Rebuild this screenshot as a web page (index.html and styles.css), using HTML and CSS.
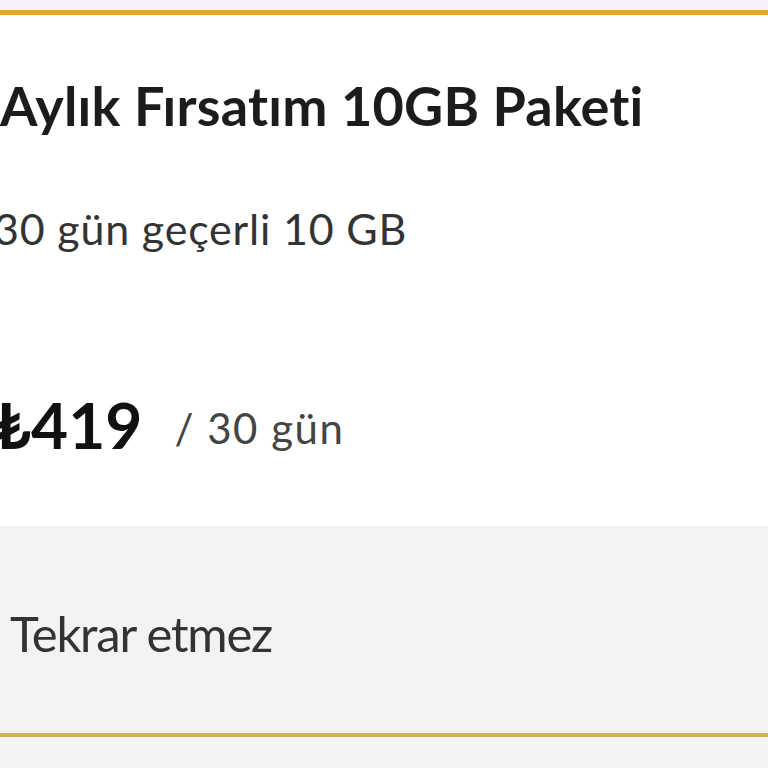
FILE: index.html
```html
<!DOCTYPE html>
<html lang="tr">
<head>
<meta charset="utf-8">
<link rel="stylesheet" href="styles.css">
</head>
<body>
<div class="top-strip"></div>
<section class="card">
  <div class="card-body">
    <h1 class="title">Aylık Fırsatım 10GB Paketi</h1>
    <p class="desc">30 gün geçerli 10 GB</p>
    <p class="price"><span class="amount">₺419</span><span class="per">/ 30 gün</span></p>
  </div>
  <div class="card-foot">
    <p class="renew">Tekrar etmez</p>
  </div>
</section>
<div class="bottom-strip"></div>
</body>
</html>
```
FILE: styles.css
```css
html, body {
  margin: 0;
  padding: 0;
}
body {
  width: 768px;
  height: 768px;
  overflow: hidden;
  background: #f4f4f2;
  font-family: "Lato", "Noto Sans", sans-serif;
}
.top-strip {
  height: 10px;
  background: #f6f1fb;
  border-bottom: 5px solid #e7a13b;
}
.card {
  background: #ffffff;
  border-bottom: 4px solid #cfb45a;
}
.card-body {
  padding: 61px 0 66px 0;
  margin-left: -6px;
}
.title {
  margin: 0 0 0 6px;
  font-size: 54px;
  line-height: 60px;
  font-weight: 700;
  color: #1c1c1c;
  letter-spacing: 0.2px;
}
.desc {
  margin: 68px 0 0 0;
  font-size: 43px;
  line-height: 50px;
  font-weight: 400;
  color: #333333;
  letter-spacing: 0.8px;
}
.price {
  margin: 136px 0 0 0;
  height: 70px;
  font-size: 64px;
  line-height: 70px;
  white-space: nowrap;
}
.amount {
  font-size: 64px;
  font-weight: 700;
  color: #111111;
  line-height: 70px;
}
.per {
  font-size: 42px;
  line-height: 40px;
  font-weight: 400;
  color: #444444;
  margin-left: 32px;
  letter-spacing: 1.5px;
  vertical-align: 5px;
}
.card-foot {
  background: #f3f3f3;
  height: 207px;
  box-sizing: border-box;
  padding: 77px 0 0 10px;
}
.renew {
  margin: 0;
  font-size: 49px;
  line-height: 60px;
  color: #333333;
  letter-spacing: -1.2px;
}
```
